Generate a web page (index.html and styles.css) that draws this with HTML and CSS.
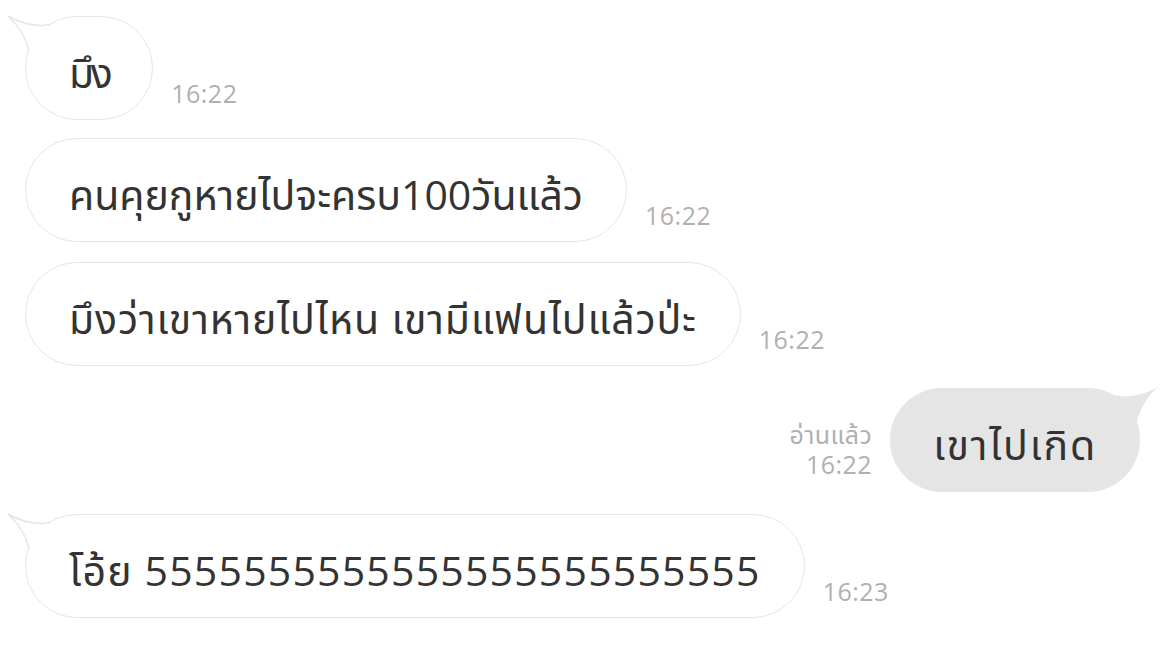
FILE: index.html
```html
<!DOCTYPE html>
<html lang="th">
<head>
<meta charset="utf-8">
<link rel="stylesheet" href="styles.css">
</head>
<body>
<div class="chat">
  <div class="row in">
    <div class="bubble in-bubble">
      <svg class="tail tail-left" width="60" height="50" viewBox="0 0 60 50"><path class="tail-fill" d="M45 11.6 C30 14 14 10 2 3 C12 12 20 24 23 38 L40 42 L58 22 Z"/><path class="tail-stroke" d="M45 11.6 C30 14 14 10 2 3 C12 12 20 24 23 38"/></svg>
      <span class="msg tight">มึง</span>
    </div>
    <span class="time">16:22</span>
  </div>
  <div class="row in r2">
    <div class="bubble in-bubble"><span class="msg">คนคุยกูหายไปจะครบ100วันแล้ว</span></div>
    <span class="time">16:22</span>
  </div>
  <div class="row in r3">
    <div class="bubble in-bubble"><span class="msg wide">มึงว่าเขาหายไปไหน เขามีแฟนไปแล้วป่ะ</span></div>
    <span class="time">16:22</span>
  </div>
  <div class="row out r4">
    <div class="meta"><span class="read">อ่านแล้ว</span><span class="time-out">16:22</span></div>
    <div class="bubble out-bubble">
      <svg class="tail tail-right" width="60" height="50" viewBox="0 0 60 50"><path class="tail-fill-out" d="M15 11.6 C30 14 46 10 58 3 C48 12 40 24 37 38 L20 42 L2 22 Z"/></svg>
      <span class="msg wide-out">เขาไปเกิด</span>
    </div>
  </div>
  <div class="row in r5">
    <div class="bubble in-bubble">
      <svg class="tail tail-left" width="60" height="50" viewBox="0 0 60 50"><path class="tail-fill" d="M45 11.6 C30 14 14 10 2 3 C12 12 20 24 23 38 L40 42 L58 22 Z"/><path class="tail-stroke" d="M45 11.6 C30 14 14 10 2 3 C12 12 20 24 23 38"/></svg>
      <span class="msg wider">โอ้ย 5555555555555555555555555</span>
    </div>
    <span class="time">16:23</span>
  </div>
</div>
</body>
</html>
```
FILE: styles.css
```css
html, body {
  margin: 0;
  padding: 0;
  background: #ffffff;
}
body {
  font-family: "Open Sans", "Noto Sans Thai", "Noto Sans", sans-serif;
  color: #333333;
}
.chat {
  display: flex;
  flex-direction: column;
  padding: 16px 34px 0 25px;
}
.r2 { margin-top: 18px; }
.r3 { margin-top: 20px; }
.r4 { margin-top: 22px; }
.r5 { margin-top: 22px; }
.row {
  display: flex;
  align-items: flex-end;
}
.row.out {
  justify-content: flex-end;
}
.bubble {
  position: relative;
  box-sizing: border-box;
  height: 104px;
  border-radius: 52px;
  padding: 8px 43px 0 43px;
  display: flex;
  align-items: center;
  white-space: nowrap;
}
.in-bubble {
  background: #ffffff;
  border: 1.5px solid #e6e6e6;
}
.out-bubble {
  background: #e5e5e5;
}
.msg {
  font-size: 41px;
  line-height: 1;
}
.msg.tight {
  letter-spacing: -3.5px;
}
.msg.wide {
  letter-spacing: 0.85px;
}
.msg.wide-out {
  letter-spacing: 1.8px;
}
.msg.wider {
  letter-spacing: 1.2px;
}
.time {
  font-size: 25px;
  letter-spacing: 0.5px;
  color: #b0b0b0;
  margin: 0 0 12px 18px;
  line-height: 30px;
}
.meta {
  display: flex;
  flex-direction: column;
  align-items: flex-end;
  margin: 0 18px 15px 0;
  color: #b0b0b0;
}
.read {
  font-size: 25px;
  letter-spacing: 0.4px;
  line-height: 34px;
}
.time-out {
  font-size: 25px;
  letter-spacing: 0.5px;
  line-height: 26px;
}
.tail {
  position: absolute;
  top: -4px;
}
.tail-left {
  left: -20px;
}
.tail-right {
  right: -20px;
}
.tail-fill {
  fill: #ffffff;
  stroke: none;
}
.tail-stroke {
  fill: none;
  stroke: #e6e6e6;
  stroke-width: 1.5;
}
.tail-fill-out {
  fill: #e5e5e5;
}
```
